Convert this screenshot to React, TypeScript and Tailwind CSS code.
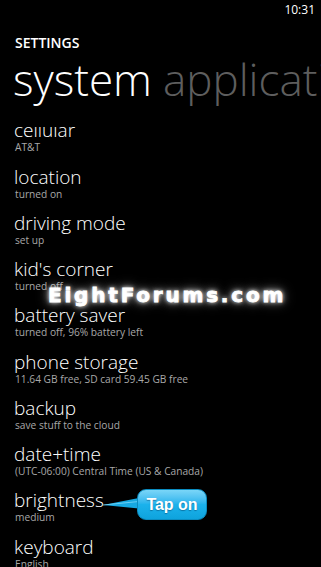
import React from 'react';

interface SettingItem {
  title: string;
  detail: string;
}

const items: SettingItem[] = [
  { title: 'cellular', detail: 'AT&T' },
  { title: 'location', detail: 'turned on' },
  { title: 'driving mode', detail: 'set up' },
  { title: "kid's corner", detail: 'turned off' },
  { title: 'battery saver', detail: 'turned off, 96% battery left' },
  { title: 'phone storage', detail: '11.64 GB free, SD card 59.45 GB free' },
  { title: 'backup', detail: 'save stuff to the cloud' },
  { title: 'date+time', detail: '(UTC-06:00) Central Time (US & Canada)' },
  { title: 'brightness', detail: 'medium' },
  { title: 'keyboard', detail: 'English' },
];

const App: React.FC = () => {
  return (
    <div className="relative w-[321px] h-[567px] overflow-hidden bg-black text-white font-['Open_Sans',sans-serif]">
      {/* status bar */}
      <div className="h-[33px] pt-[2px] pr-[6px] flex justify-end">
        <span className="text-[12px] leading-[16px]">10:31</span>
      </div>

      <div className="pl-[15px] text-[14px] leading-[20px] font-semibold">SETTINGS</div>

      {/* pivot header */}
      <div className="h-[74px] pt-[2px] pl-[13px] whitespace-nowrap overflow-hidden text-[44px] leading-[48px] font-light">
        <span>system</span>
        <span className="ml-[11px] text-[#5e5e5e]">applications</span>
      </div>

      {/* settings list, scrolled a bit */}
      <div className="h-[440px] overflow-hidden">
        <div className="-mt-[7.6px]">
          {items.map((item) => (
            <div key={item.title} className="h-[46.25px] pl-[14px]">
              <div className="text-[19px] leading-[22px] font-light whitespace-nowrap">{item.title}</div>
              <div className="pl-[1px] text-[10.2px] leading-[13px] text-[#a8a8a8] whitespace-nowrap">
                {item.detail}
              </div>
            </div>
          ))}
        </div>
      </div>

      {/* watermark */}
      <div className="absolute left-[48px] top-[283px] text-[20px] leading-[24px] font-bold tracking-[2.8px] font-['DejaVu_Sans',sans-serif] text-white [-webkit-text-stroke:0.8px_#fff] [text-shadow:0_0_4px_#fff,0_0_8px_rgba(255,255,255,0.7),0_0_14px_rgba(255,255,255,0.45)]">
        EightForums.com
      </div>

      {/* callout */}
      <svg className="absolute left-[100px] top-[495px]" width="44" height="18" viewBox="0 0 44 18">
        <polygon points="3,10 44,2 44,14" fill="#16a9e2" />
        <line x1="3" y1="10" x2="44" y2="6" stroke="#7fd8f8" strokeWidth="0.8" />
      </svg>
      <div className="absolute left-[137px] top-[489px] w-[70px] h-[31px] rounded-[9px] border border-[#0b8cc0] bg-gradient-to-b from-[#7ad6f8] via-[#1bb2ec] to-[#0ea3dd] flex items-center justify-center">
        <span className="text-[16px] leading-[20px] font-bold font-['Liberation_Sans',sans-serif] text-white [text-shadow:0_1px_1px_rgba(0,60,100,0.5)]">
          Tap on
        </span>
      </div>
    </div>
  );
};

export default App;
